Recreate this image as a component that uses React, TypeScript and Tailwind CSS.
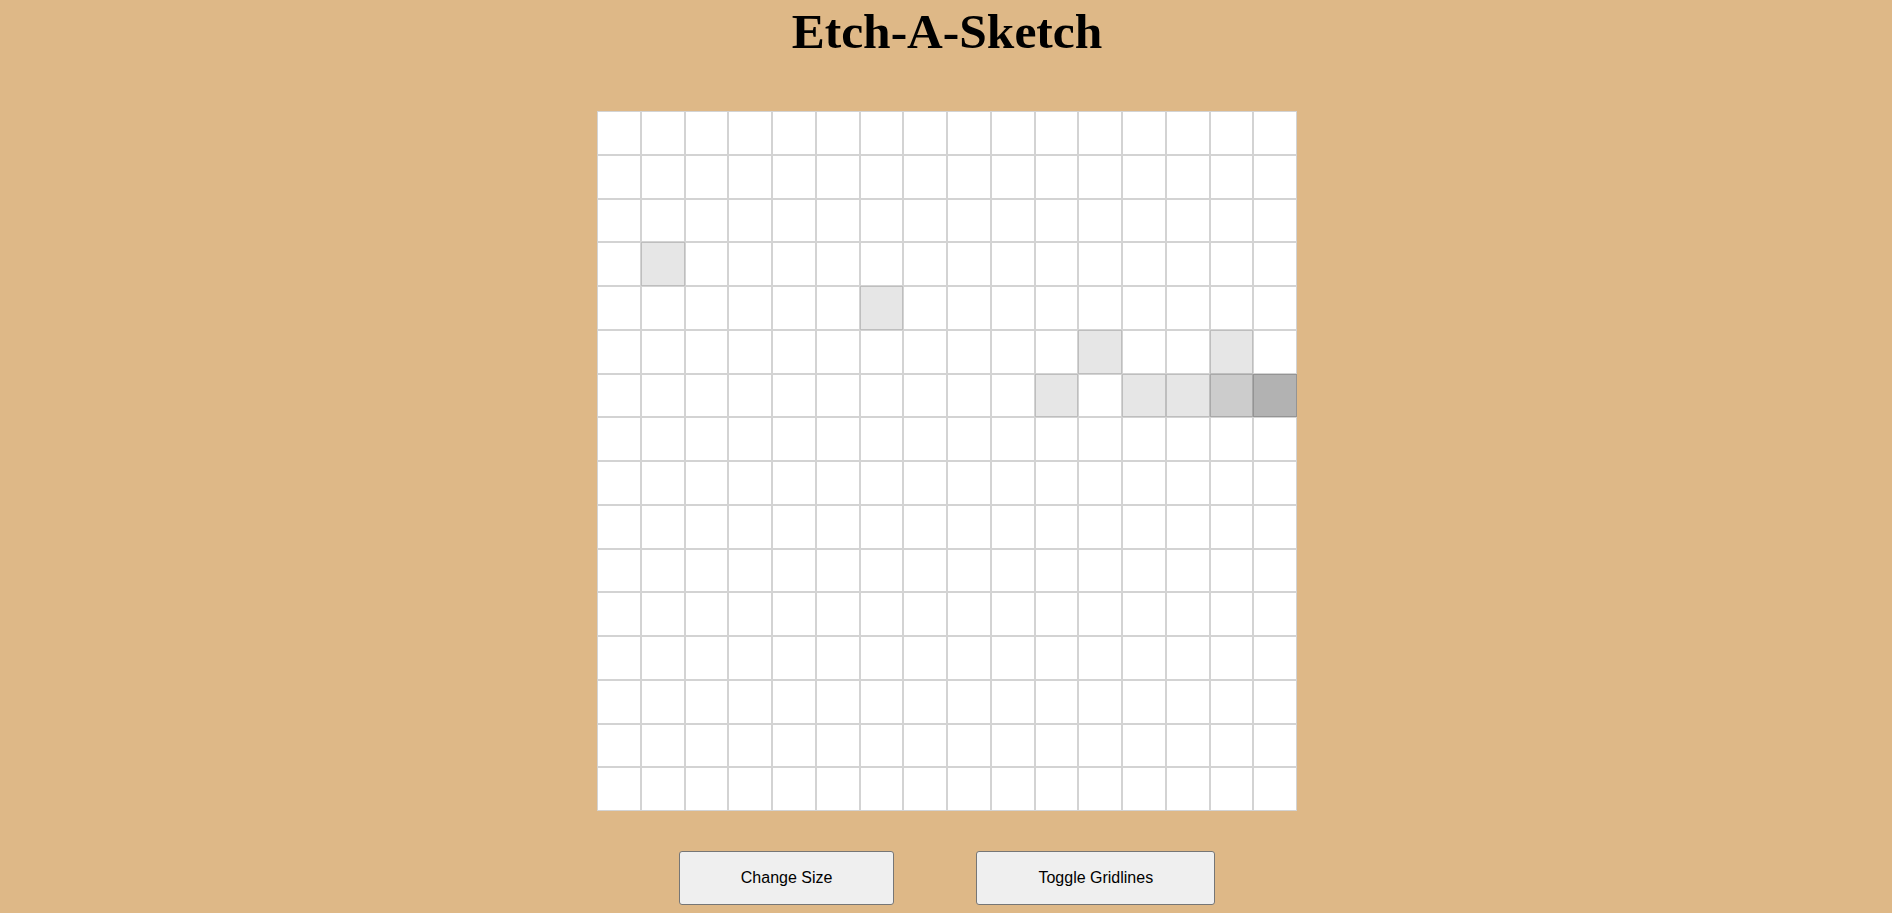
import React from "react";

const shaded: Record<string, string> = {
  "3-1": "brightness-90",
  "4-6": "brightness-90",
  "5-11": "brightness-90",
  "5-14": "brightness-90",
  "6-10": "brightness-90",
  "6-12": "brightness-90",
  "6-13": "brightness-90",
  "6-14": "brightness-80",
  "6-15": "brightness-70",
};

export default function App() {
  const cells = [];
  for (let r = 0; r < 16; r++) {
    for (let c = 0; c < 16; c++) {
      const k = `${r}-${c}`;
      cells.push(
        <div
          key={k}
          className={`box-border border border-[#d3d3d3] bg-white ${shaded[k] ?? ""}`}
        />
      );
    }
  }
  return (
    <div className="min-h-screen w-full bg-[#deb887] flex flex-col items-center pl-[2px]">
      <h1
        className="pt-[4px] text-[49.5px] leading-[56px] font-bold text-black"
        style={{ fontFamily: '"Liberation Serif", "Times New Roman", serif' }}
      >
        Etch-A-Sketch
      </h1>
      <div className="mt-[51px] w-[700px] h-[700px] grid grid-cols-16 grid-rows-16">
        {cells}
      </div>
      <div
        className="mt-[40px] flex gap-[82px]"
        style={{ fontFamily: '"Liberation Sans", Arial, sans-serif' }}
      >
        <button className="bg-[#efefef] border border-[#767676] rounded-[3px] px-[61px] py-[17px] text-[16px] leading-[18px] text-black">
          Change Size
        </button>
        <button className="bg-[#efefef] border border-[#767676] rounded-[3px] px-[61px] py-[17px] text-[16px] leading-[18px] text-black">
          Toggle Gridlines
        </button>
      </div>
    </div>
  );
}
